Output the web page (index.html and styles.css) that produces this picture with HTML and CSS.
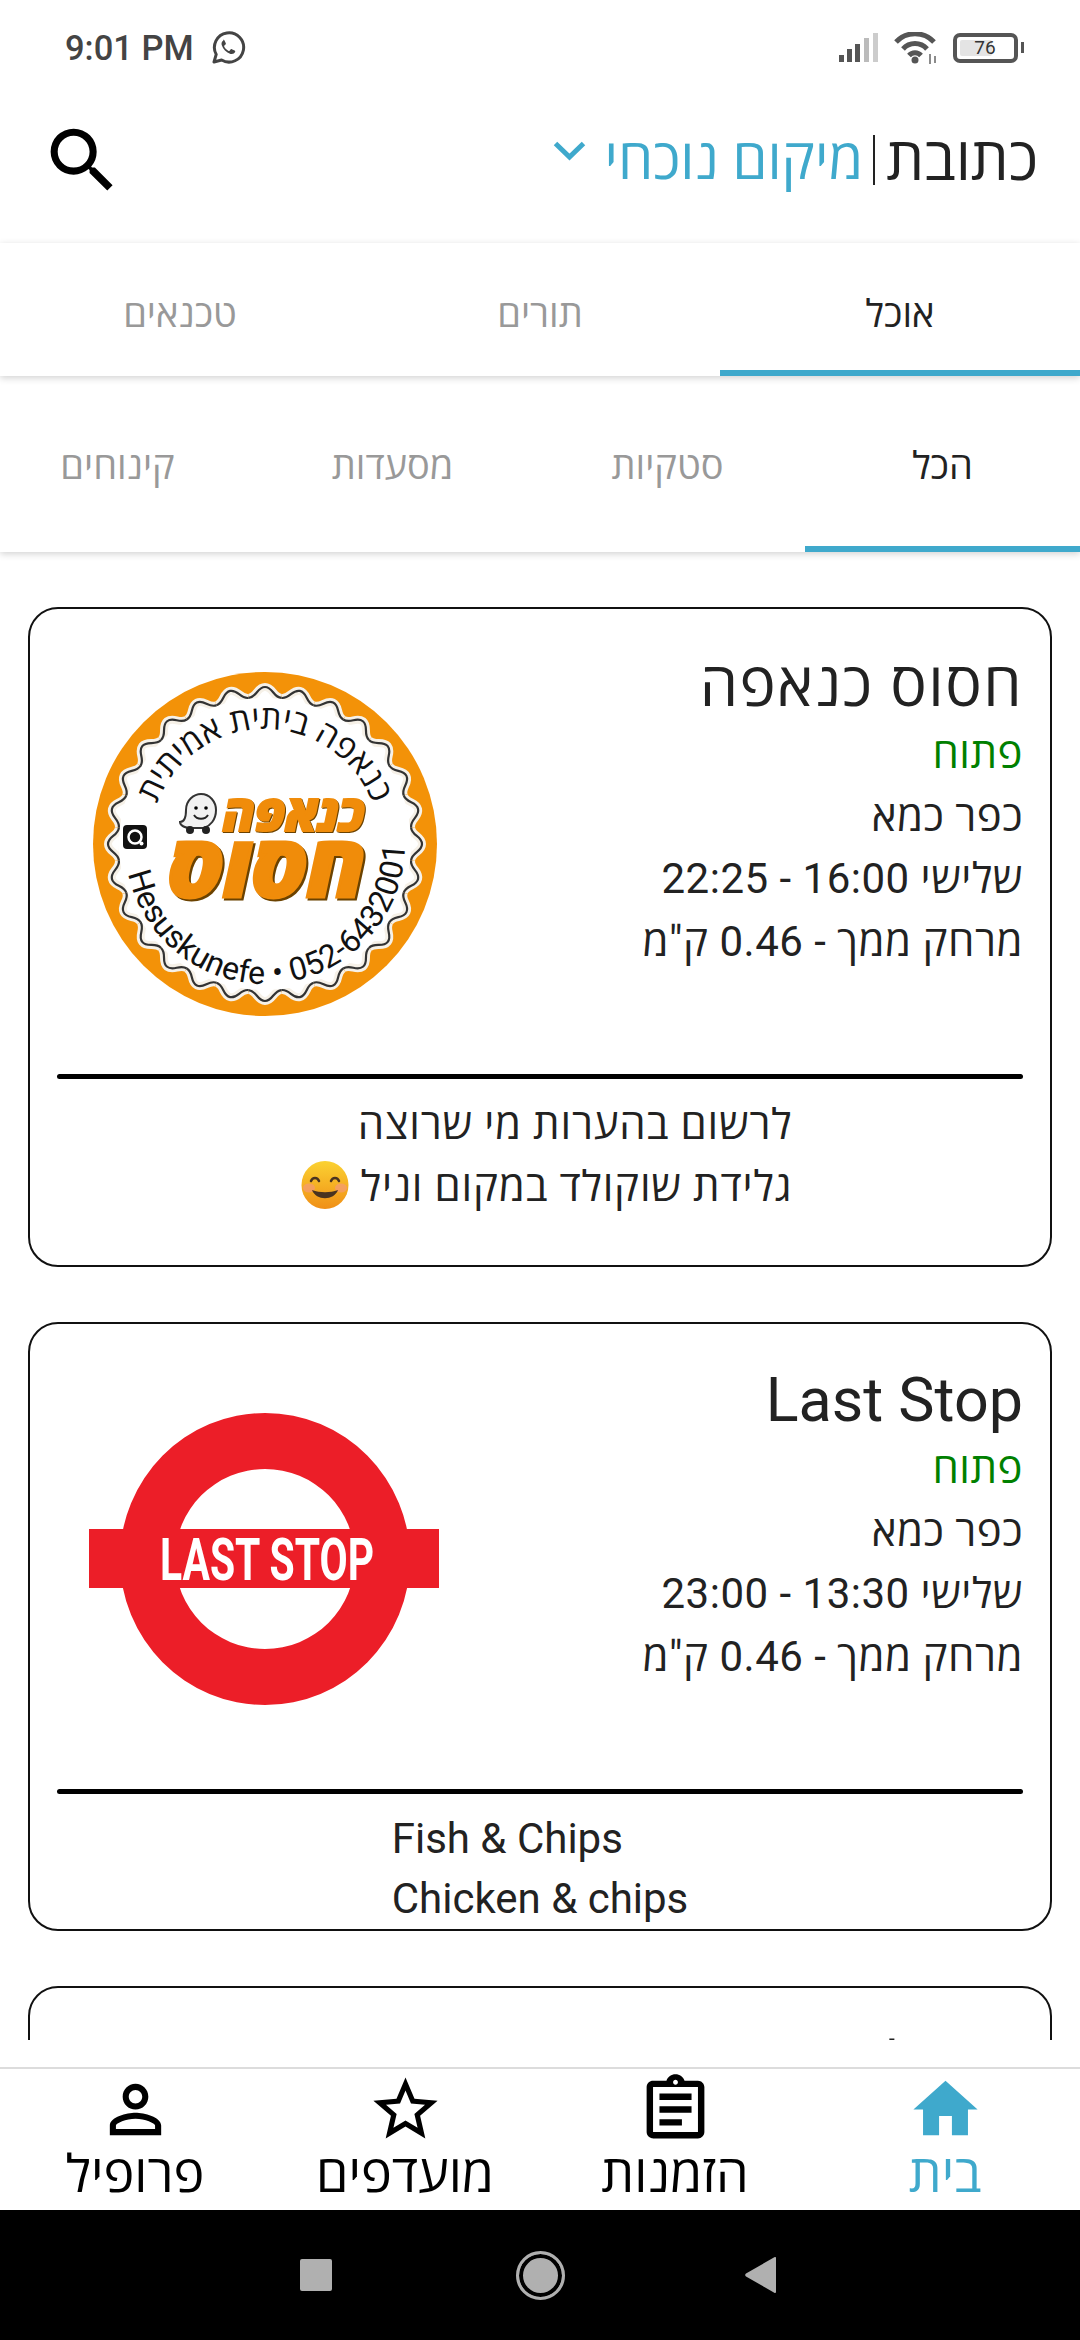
FILE: index.html
```html
<!DOCTYPE html>
<html lang="he">
<head>
<meta charset="utf-8">
<title>בית</title>
<link rel="stylesheet" href="styles.css">
</head>
<body>
<div class="app">
  <div class="status" dir="ltr">
    <span class="time">9:01 PM</span>
    <svg class="wa" viewBox="0 0 36 36"><path d="M4 32l2.200-7.600A14.600 14.600 0 1 1 11.600 30z" fill="none" stroke="#444" stroke-width="3" stroke-linejoin="round"/><path d="M13.500 10.500c-1.600.8-2.400 2.600-1.800 4.600 1.300 4.300 4.500 7.400 8.800 8.800 2 .6 3.800-.2 4.600-1.800.3-.7.1-1.200-.5-1.500l-2.800-1.400c-.5-.2-.9-.1-1.200.3l-1 1.200c-.3.3-.6.4-1 .2-2-.9-3.500-2.400-4.400-4.400-.2-.4-.1-.7.2-1l1.100-1c.4-.3.5-.7.3-1.200l-1.300-2.800c-.3-.6-.9-.8-1.500-.5z" fill="#444"/></svg>
    <span class="status-gap"></span>
    <svg class="sig" viewBox="0 0 40 29"><rect x="0" y="22" width="5" height="7" fill="#555"/><rect x="8" y="16" width="5" height="13" fill="#555"/><rect x="16" y="11" width="5" height="18" fill="#555"/><rect x="25" y="5" width="5" height="24" fill="#bbb"/><rect x="34" y="0" width="5" height="29" fill="#ccc"/></svg>
    <svg class="wifi" viewBox="0 0 44 32"><g fill="none" stroke="#555" stroke-width="5"><path d="M2 10a26 26 0 0 1 38 0"/><path d="M9 17a16 16 0 0 1 24 0"/><path d="M15 23.500a8 8 0 0 1 12 0"/></g><circle cx="21" cy="28" r="3.500" fill="#555"/><path d="M36 22v10M41 24v7" stroke="#666" stroke-width="1.500"/></svg>
    <div class="battery"><div class="battery-fill"><span>76</span></div></div>
    <span class="nub"></span>
  </div>

  <header class="top">
    <svg class="search" viewBox="0 0 24 24"><path d="M15.500 14h-.79l-.28-.27A6.470 6.470 0 0 0 16 9.500 6.500 6.500 0 1 0 9.500 16c1.610 0 3.090-.59 4.230-1.570l.27.28v.79l5 4.990L20.490 19l-4.990-5zm-6 0C7.010 14 5 11.990 5 9.500S7.010 5 9.500 5 14 7.010 14 9.500 11.990 14 9.500 14z"/></svg>
    <div class="address">
      <span class="addr-label">כתובת</span>
      <span class="addr-sep"></span>
      <span class="addr-value">מיקום נוכחי</span>
      <svg class="chev" viewBox="0 0 33 20"><path d="M2.500 2.500L16.500 16 30.500 2.500" fill="none" stroke="#3fa9cc" stroke-width="5"/></svg>
    </div>
  </header>

  <nav class="tabs tabs-main">
    <div class="tab tab-on">אוכל</div>
    <div class="tab">תורים</div>
    <div class="tab">טכנאים</div>
  </nav>
  <nav class="tabs tabs-sub">
    <div class="tab tab-on">הכל</div>
    <div class="tab">סטקיות</div>
    <div class="tab">מסעדות</div>
    <div class="tab">קינוחים</div>
  </nav>

  <main class="list">
    <article class="card card-tall">
      <div class="card-top">
        <div class="info">
          <h2 class="name name-he">חסוס כנאפה</h2>
          <div class="open">פתוח</div>
          <div class="line">כפר כמא</div>
          <div class="line">שלישי 16:00 - 22:25</div>
          <div class="line">מרחק ממך - 0.46 ק"מ</div>
        </div>
        <svg class="logo" viewBox="-208 -235 416 440">
          <defs>
            <g id="lobe"><path d="M-16.460-146.070C-8-146.900-8-157 0-157C8-157 8-146.900 16.460-146.070"/></g>
            <g id="lobes">
              <use href="#lobe"/><use href="#lobe" transform="rotate(12.857)"/><use href="#lobe" transform="rotate(25.714)"/><use href="#lobe" transform="rotate(38.571)"/><use href="#lobe" transform="rotate(51.429)"/><use href="#lobe" transform="rotate(64.286)"/><use href="#lobe" transform="rotate(77.143)"/>
            </g>
            <g id="ring"><use href="#lobes"/><use href="#lobes" transform="rotate(90)"/><use href="#lobes" transform="rotate(180)"/><use href="#lobes" transform="rotate(270)"/></g>
            <path id="arcTop" d="M-115 0A115 115 0 0 1 115 0"/>
            <path id="arcBottom" d="M-140 0A140 140 0 0 0 140 0"/>
          </defs>
          <circle r="172" fill="#f39208"/>
          <circle r="147" fill="#fff"/>
          <use href="#ring" fill="#fff" stroke="#f6f1e8" stroke-width="8"/>
          <circle r="146" fill="#fff"/>
          <use href="#ring" fill="none" stroke="#333" stroke-width="2.200"/>
          <text class="logo-arc" text-anchor="middle"><textPath href="#arcTop" startOffset="50%">כנאפה ביתית אמיתית</textPath></text>
          <g transform="rotate(-6)"><text class="logo-arc-b" text-anchor="middle"><textPath href="#arcBottom" startOffset="50%">Hesuskunefe • 052-6432001</textPath></text></g>
          <text class="logo-small" x="100" y="-13" textLength="142" lengthAdjust="spacingAndGlyphs">כנאפה</text>
          <text class="logo-big" x="100" y="53" textLength="197" lengthAdjust="spacingAndGlyphs">חסוס</text>
          <g transform="translate(-67 -30)">
            <path d="M-18 8C-12 8-12 0-12-4C-12-14-4-20 3-20C12-20 18-12 18-4C18 6 12 12 6 14H-8C-12 14-18 12-18 8Z" fill="#f2f2f2" stroke="#333" stroke-width="2"/>
            <circle cx="-2" cy="-6" r="1.800"/><circle cx="8" cy="-6" r="1.800"/>
            <path d="M-4 1C-1 6 7 6 10 1" fill="none" stroke="#222" stroke-width="2"/>
            <circle cx="-8" cy="16" r="4" fill="#222"/><circle cx="8" cy="16" r="4" fill="#222"/>
          </g>
          <g transform="translate(-130 -7)">
            <rect x="-12" y="-12" width="24" height="24" rx="4" fill="#111"/>
            <circle r="6.500" fill="none" stroke="#fff" stroke-width="2.500"/>
            <circle cx="6.500" cy="6.500" r="2" fill="#fff"/>
          </g>
        </svg>
      </div>
      <div class="divider"></div>
      <div class="notes notes-he"><div class="notes-in">
        <div class="note note-he">לרשום בהערות מי שרוצה</div>
        <div class="note note-he">גלידת שוקולד במקום וניל <svg class="emoji" viewBox="0 0 50 50"><defs><linearGradient id="eg" x1="0" y1="0" x2="0" y2="1"><stop offset="0" stop-color="#fbd232"/><stop offset="1" stop-color="#f08f16"/></linearGradient></defs><ellipse cx="25" cy="25" rx="23.500" ry="24" fill="url(#eg)"/><ellipse cx="9" cy="28" rx="6" ry="4.500" fill="#f59a78" opacity=".7"/><ellipse cx="41" cy="28" rx="6" ry="4.500" fill="#f59a78" opacity=".7"/><path d="M11 21c1.500-4 6.500-4 8 0M31 21c1.500-4 6.500-4 8 0" fill="none" stroke="#4a3320" stroke-width="2.500" stroke-linecap="round"/><path d="M12 30c4 11 22 11 26 0-8 3-18 3-26 0z" fill="#4a3320"/></svg></div>
      </div></div>
    </article>

    <article class="card">
      <div class="card-top">
        <div class="info">
          <h2 class="name">Last Stop</h2>
          <div class="open">פתוח</div>
          <div class="line">כפר כמא</div>
          <div class="line">שלישי 13:30 - 23:00</div>
          <div class="line">מרחק ממך - 0.46 ק"מ</div>
        </div>
        <svg class="logo" viewBox="-208 -235 416 440">
          <path fill-rule="evenodd" d="M-145 0a145 146 0 1 0 290 0a145 146 0 1 0-290 0zM-90 0a90 90 0 1 0 180 0a90 90 0 1 0-180 0z" fill="#ec1e28"/>
          <rect x="-176" y="-30" width="350" height="59" fill="#ec1e28"/>
          <text class="logo-stop" x="-105" y="21" textLength="214" lengthAdjust="spacingAndGlyphs">LAST STOP</text>
        </svg>
      </div>
      <div class="divider"></div>
      <div class="notes"><div class="notes-in">
        <div class="note note-tight">Fish &amp; Chips</div>
        <div class="note note-tight">Chicken &amp; chips</div>
      </div></div>
    </article>

    <article class="card">
      <div class="card-top">
        <div class="info">
          <h2 class="name name-he">ביס לוי</h2>
        </div>
      </div>
    </article>
  </main>

  <footer class="bottom">
    <div class="bt bt-on">
      <svg class="bt-ic" viewBox="0 0 24 24"><path d="M10 20v-6h4v6h5v-8h3L12 3 2 12h3v8z"/></svg>
      <span class="bt-l">בית</span>
    </div>
    <div class="bt">
      <svg class="bt-ic" viewBox="0 0 24 24"><path d="M7 15h7v2H7zm0-4h10v2H7zm0-4h10v2H7zm12-4h-4.180C14.400 1.840 13.300 1 12 1c-1.300 0-2.400.84-2.820 2H5c-.14 0-.27.01-.4.04-.39.08-.74.28-1.010.55-.18.18-.33.4-.43.64-.1.23-.16.49-.16.77v14c0 .27.06.54.16.78s.25.45.43.64c.27.27.62.47 1.010.55.13.02.26.03.4.03h14c1.100 0 2-.9 2-2V5c0-1.100-.9-2-2-2zm-7-.25c.41 0 .75.34.75.75s-.34.75-.75.75-.75-.34-.75-.75.34-.75.75-.75zM19 19H5V5h14v14z"/></svg>
      <span class="bt-l">הזמנות</span>
    </div>
    <div class="bt">
      <svg class="bt-ic" viewBox="0 0 24 24"><path d="M22 9.240l-7.190-.62L12 2 9.190 8.630 2 9.240l5.460 4.730L5.820 21 12 17.270 18.180 21l-1.630-7.030L22 9.240zM12 15.400l-3.760 2.270 1-4.280-3.320-2.880 4.380-.38L12 6.100l1.710 4.040 4.380.38-3.320 2.880 1 4.280L12 15.400z"/></svg>
      <span class="bt-l">מועדפים</span>
    </div>
    <div class="bt">
      <svg class="bt-ic" viewBox="0 0 24 24"><path d="M12 5.900c1.160 0 2.100.94 2.100 2.100s-.94 2.100-2.100 2.100S9.900 9.160 9.900 8s.94-2.100 2.100-2.100m0 9c2.970 0 6.100 1.460 6.100 2.100v1.100H5.900V17c0-.64 3.130-2.100 6.100-2.100M12 4C9.790 4 8 5.790 8 8s1.790 4 4 4 4-1.790 4-4-1.790-4-4-4zm0 9c-2.670 0-8 1.340-8 4v3h16v-3c0-2.660-5.330-4-8-4z"/></svg>
      <span class="bt-l">פרופיל</span>
    </div>
  </footer>

  <div class="sysbar" dir="ltr">
    <span class="sys-square"></span>
    <span class="sys-circle"></span>
    <svg class="sys-back" viewBox="0 0 31 36"><path d="M31 1v34a1 1 0 0 1-1.700.7L1 19.500a2 2 0 0 1 0-3L29.300.300A1 1 0 0 1 31 1z" fill="#b0b0b0"/></svg>
  </div>
</div>
</body>
</html>
```

FILE: styles.css
```css
* { box-sizing: border-box; }
html, body { margin: 0; padding: 0; }
body {
  width: 1080px;
  height: 2340px;
  background: #fff;
  overflow: hidden;
  font-family: Roboto, "Open Sans", "Liberation Sans", sans-serif;
  color: #222;
}
.app {
  width: 1080px;
  height: 2340px;
  display: flex;
  flex-direction: column;
  direction: rtl;
}

/* status bar */
.status {
  flex: none;
  height: 95px;
  display: flex;
  align-items: center;
  direction: ltr;
  padding: 0 56px 0 65px;
}
.time { font-size: 34.500px; font-weight: 500; color: #444; width: 130px; white-space: nowrap; }
.wa { width: 36px; height: 36px; margin-left: 15px; }
.status-gap { flex: 1; }
.sig { width: 40px; height: 29px; }
.wifi { width: 44px; height: 32px; margin-left: 15px; }
.battery {
  width: 65px;
  height: 30px;
  margin-left: 15px;
  border: 4px solid #555;
  border-radius: 7px;
  padding: 3px 22px 3px 3px;
  display: flex;
}
.battery-fill {
  flex: 1;
  background: #e4e4e4;
  border-radius: 2px;
  display: flex;
  align-items: center;
  justify-content: center;
}
.battery-fill span { font-size: 19px; color: #333; width: 0; display: flex; justify-content: center; margin-left: 18px; }
.nub { width: 3px; height: 11px; background: #555; margin-left: 3px; }

/* header */
.top {
  flex: none;
  height: 148px;
  direction: ltr;
  display: flex;
  align-items: center;
  justify-content: space-between;
  padding: 0 42px 18px 40px;
}
.search { width: 85px; height: 85px; fill: #000; }
.address { display: flex; direction: rtl; align-items: center; }
.addr-label { font-size: 60px; color: #222; line-height: 60px; }
.addr-sep { width: 2px; height: 50px; background: #222; margin: 0 11px 0 10px; }
.addr-value { font-size: 56px; color: #3fa9cc; line-height: 60px; }
.chev { width: 33px; height: 20px; margin: 0 19px 18px 0; }

/* tabs */
.tabs {
  flex: none;
  display: flex;
  background: #fff;
  overflow: hidden;
  position: relative;
  box-shadow: 0 2px 7px rgba(0,0,0,.18);
}
.tabs-main { height: 133px; z-index: 2; }
.tabs-sub { height: 176px; z-index: 1; }
.tab {
  flex: none;
  display: flex;
  align-items: center;
  justify-content: center;
  font-size: 38px;
  color: #999;
}
.tabs-main .tab { width: 360px; padding-top: 4px; }
.tabs-sub .tab { width: 275px; }
.tab-on { color: #222; border-bottom: 6px solid #3fa9cc; }
.tabs-main .tab-on { padding-top: 10px; }
.tabs-sub .tab-on { padding-top: 6px; }

/* list */
.list {
  flex: 1;
  min-height: 0;
  overflow: hidden;
  padding: 55px 28px 0;
  margin-bottom: 27px;
  display: flex;
  flex-direction: column;
  gap: 55px;
}
.card {
  flex: none;
  border: 2px solid #111;
  border-radius: 30px;
  padding: 0 27px 0;
}
.card-tall { padding-bottom: 47px; }
.card-top { display: flex; height: 465px; justify-content: space-between; }
.info { padding-top: 39px; }
.name { margin: 0 0 1px; font-size: 61px; font-weight: 400; line-height: 74px; color: #222; }
.name-he { letter-spacing: 1.500px; }
.open { font-size: 42px; line-height: 62.500px; color: #008000; letter-spacing: .5px; }
.line { font-size: 42px; line-height: 62.500px; color: #222; letter-spacing: .5px; }
.logo { width: 416px; height: 440px; flex: none; }
.divider { height: 5px; background: #000; border-radius: 3px; }
.notes { display: flex; justify-content: center; padding-top: 15px; }
.notes-he { padding-left: 12px; }
.notes-in { display: block; }
.note { font-size: 42px; line-height: 62px; unicode-bidi: plaintext; text-align: start; color: #222; display: block; }
.note-he { letter-spacing: .8px; }
.note-tight { line-height: 60px; }
.emoji { width: 50px; height: 50px; vertical-align: -9px; }

/* logo text */
.logo-arc { font-size: 33px; fill: #111; }
.logo-arc-b { font-size: 32px; fill: #111; letter-spacing: .3px; direction: ltr; }
.logo-small { font-size: 50px; font-weight: 800; font-style: italic; fill: #f08c0a; direction: rtl; stroke: #f08c0a; stroke-width: 2px; filter: drop-shadow(1.500px 1.500px 0 #6b4200); }
.logo-big { font-size: 86px; font-weight: 800; font-style: italic; fill: #f08c0a; direction: rtl; stroke: #f08c0a; stroke-width: 3px; filter: drop-shadow(2px 2px 0 #6b4200); }
.logo-stop { font-size: 59px; font-weight: 700; fill: #fff; direction: ltr; }

/* bottom nav */
.bottom {
  flex: none;
  height: 143px;
  display: flex;
  border-top: 2px solid #dcdcdc;
  background: #fff;
}
.bt { flex: 1; display: flex; flex-direction: column; align-items: center; padding-top: 2px; }
.bt-ic { width: 77px; height: 77px; fill: #000; flex: none; }
.bt-l { font-size: 52px; line-height: 54px; color: #000; }
.bt-on .bt-ic { fill: #3fa9cc; }
.bt-on .bt-l { color: #3fa9cc; }

/* system bar */
.sysbar {
  flex: none;
  height: 130px;
  background: #000;
  position: relative;
  display: flex;
  align-items: center;
  padding-left: 300px;
}
.sys-square { width: 32px; height: 32px; background: #b0b0b0; border-radius: 2px; }
.sys-circle {
  width: 49px;
  height: 49px;
  margin-left: 184px;
  border-radius: 50%;
  background: #b0b0b0;
  border: 3px solid #b0b0b0;
  box-shadow: inset 0 0 0 4px #000;
}
.sys-back { width: 31px; height: 36px; margin-left: 180px; }
```
